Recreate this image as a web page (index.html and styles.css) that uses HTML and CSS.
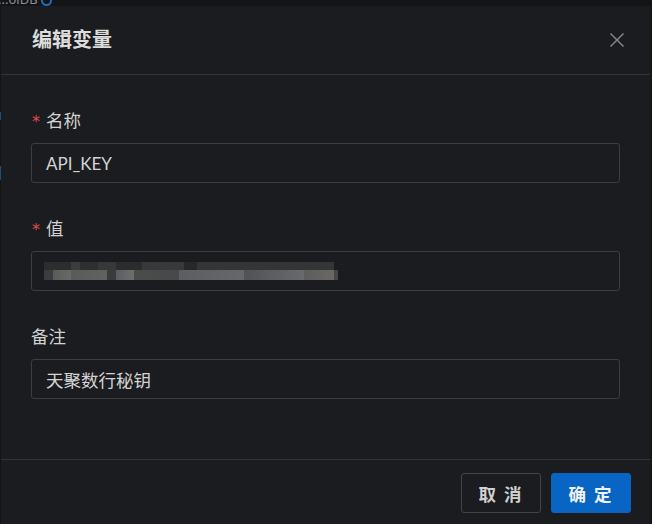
FILE: index.html
```html
<!DOCTYPE html>
<html lang="zh-CN">
<head>
<meta charset="utf-8">
<title>编辑变量</title>
<link rel="stylesheet" href="styles.css">
</head>
<body>
<div class="page">
  <div class="page-top"><span class="crumb">...olDB</span><span class="crumb-icon"></span></div>
  <div class="page-marks"><span class="mark m1"></span><span class="mark m2"></span></div>
</div>
<div class="modal">
  <div class="modal-header">
    <div class="modal-title">编辑变量</div>
    <button class="modal-close" aria-label="关闭">
      <svg width="16" height="16" viewBox="0 0 16 16"><path d="M1.5 1.5 L14.5 14.5 M14.5 1.5 L1.5 14.5" stroke="#8c8c8c" stroke-width="1.4" fill="none"/></svg>
    </button>
  </div>
  <div class="modal-body">
    <div class="form-item">
      <label class="form-label"><span class="req">*</span>名称</label>
      <div class="input latin">API_KEY</div>
    </div>
    <div class="form-item">
      <label class="form-label"><span class="req">*</span>值</label>
      <div class="input"><div class="blur"><div class="blur-row top"></div><div class="blur-row bottom"></div></div></div>
    </div>
    <div class="form-item">
      <label class="form-label">备注</label>
      <div class="input">天聚数行秘钥</div>
    </div>
  </div>
  <div class="modal-footer">
    <button class="btn btn-default">取 消</button>
    <button class="btn btn-primary">确 定</button>
  </div>
</div>
</body>
</html>
```
FILE: styles.css
```css
* { box-sizing: border-box; }
html, body {
  margin: 0;
  padding: 0;
  width: 652px;
  height: 524px;
  overflow: hidden;
  background: #131416;
  font-family: "Noto Sans", "Noto Sans CJK SC", sans-serif;
}
.page {
  position: relative;
  height: 524px;
}
.page-top {
  height: 6px;
  overflow: hidden;
  display: flex;
  align-items: flex-end;
  gap: 3px;
  color: #8a8f96;
  font-size: 13px;
  line-height: 13px;
}
.crumb { margin-top: -8px; margin-left: -2px; }
.crumb-icon {
  width: 11px;
  height: 11px;
  border-radius: 50%;
  border: 2px solid #1f6fb8;
  margin-top: -6px;
}
.page-marks {
  display: flex;
  flex-direction: column;
}
.mark {
  width: 1px;
  background: #1d4f7d;
}
.m1 { height: 8px; margin-top: 106px; }
.m2 { height: 14px; margin-top: 46px; }

.modal {
  position: absolute;
  left: 1px;
  top: 6px;
  width: 649px;
  height: 518px;
  background: #1b1c1f;
  display: flex;
  flex-direction: column;
}
.modal-header {
  height: 69px;
  border-bottom: 1px solid #333438;
  display: flex;
  align-items: center;
  justify-content: space-between;
  padding: 0 25px 0 31px;
}
.modal-title {
  color: #dcdcdc;
  font-size: 20px;
  font-weight: 700;
  line-height: 28px;
}
.modal-close {
  background: none;
  border: 0;
  padding: 0;
  width: 16px;
  height: 16px;
  display: flex;
}
.modal-body {
  flex: 1;
  padding: 31px 30px 0 30px;
  display: flex;
  flex-direction: column;
  gap: 31px;
}
.form-item {
  display: flex;
  flex-direction: column;
}
.form-label {
  color: #d2d2d2;
  font-size: 17.5px;
  line-height: 28px;
  height: 28px;
  margin-bottom: 9px;
  display: flex;
  align-items: center;
}
.req {
  color: #e84749;
  font-family: "DejaVu Sans", sans-serif;
  font-size: 16px;
  margin-right: 6px;
  margin-left: 1px;
  margin-top: 3px;
}
.input {
  height: 40px;
  border: 1px solid #3c3d41;
  border-radius: 3px;
  padding: 0 14px;
  color: #d4d4d4;
  font-size: 17.5px;
  display: flex;
  align-items: center;
}
.input.latin {
  font-family: "Lato", "Noto Sans", sans-serif;
  font-size: 17px;
}
.blur {
  width: 294px;
  height: 18px;
  margin-left: -2px;
  display: flex;
  flex-direction: column;
}
.blur-row.top {
  height: 8px;
  width: 290px;
  background: linear-gradient(90deg,
    #2b2d2f 0, #2b2d2f 27px, #3b3d3c 27px, #3b3d3c 36px, #2e3030 36px, #2e3030 54px,
    #363937 54px, #363937 72px, #2a2c2e 72px, #2a2c2e 98px, #38393a 98px, #38393a 140px,
    #262829 140px, #262829 153px, #333537 153px, #333537 290px);
}
.blur-row.bottom {
  height: 10px;
  width: 294px;
  background: linear-gradient(90deg,
    #3a3d40 0, #3a3d40 9px, #5a5a5a 9px, #6a6a68 27px, #585b5a 27px, #616360 63px,
    #3a3b3c 63px, #3a3b3c 72px, #5a5e60 72px, #6e6e6e 90px, #4c4c4d 90px, #474849 135px,
    #5e5e60 135px, #676769 200px, #525255 200px, #6a6a6c 260px, #5d5d5d 260px, #6a6867 290px, #4a4540 290px, #4a4540 294px);
}
.modal-footer {
  height: 65px;
  border-top: 1px solid #333438;
  display: flex;
  justify-content: flex-end;
  gap: 10px;
  padding: 13px 19px 0 0;
}
.btn {
  width: 80px;
  height: 40px;
  border-radius: 3px;
  font-family: "Noto Sans CJK SC", sans-serif;
  font-size: 17.5px;
  font-weight: 700;
  letter-spacing: 2px;
  padding: 0;
}
.btn-default {
  background: #1b1c1f;
  border: 1px solid #434448;
  color: #d0d0d0;
}
.btn-primary {
  background: #0965c4;
  border: 1px solid #0965c4;
  color: #f2f2f2;
}
```
